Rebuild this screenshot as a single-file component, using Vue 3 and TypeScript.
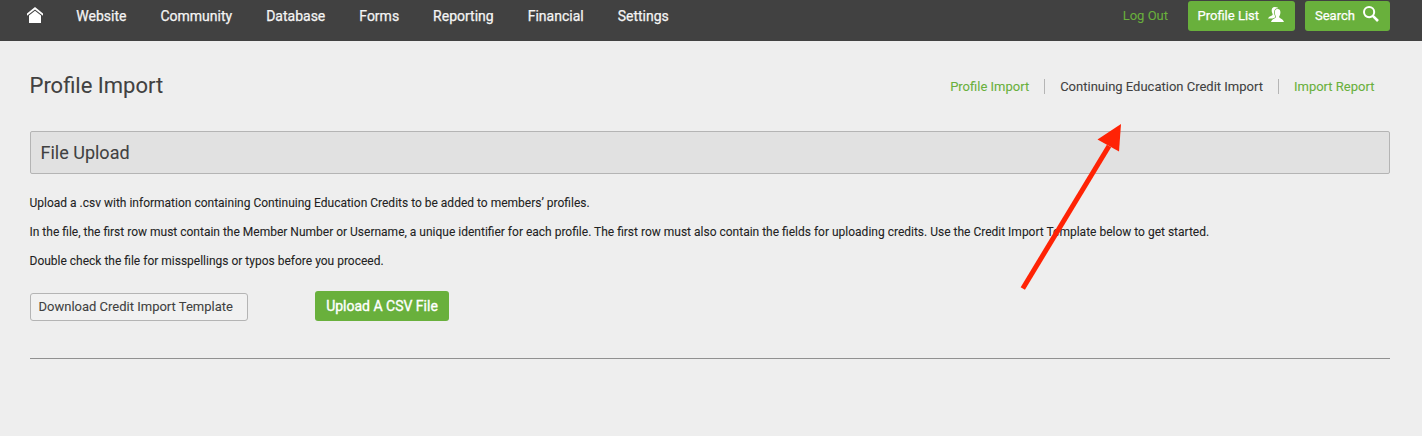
<script setup lang="ts">
interface Tab {
  label: string
  current?: boolean
}

const navItems: string[] = ['Website', 'Community', 'Database', 'Forms', 'Reporting', 'Financial', 'Settings']

const tabs: Tab[] = [
  { label: 'Profile Import' },
  { label: 'Continuing Education Credit Import', current: true },
  { label: 'Import Report' },
]

const paragraphs: string[] = [
  'Upload a .csv with information containing Continuing Education Credits to be added to members’ profiles.',
  'In the file, the first row must contain the Member Number or Username, a unique identifier for each profile. The first row must also contain the fields for uploading credits. Use the Credit Import Template below to get started.',
  'Double check the file for misspellings or typos before you proceed.',
]
</script>

<template>
  <div class="page">
    <header class="topbar">
      <nav class="nav">
        <svg class="home" width="16" height="16" viewBox="0 0 16 16" aria-label="Home">
          <path d="M0 6.6 L8 0 L16 6.6 V8.8 L8 2.4 L0 8.8 Z" fill="#fff" />
          <path d="M2 8.4 L8 3.8 L14 8.4 V16 H2 Z" fill="#fff" />
        </svg>
        <a v-for="item in navItems" :key="item" class="nav-item">{{ item }}</a>
      </nav>
      <div class="actions">
        <a class="logout">Log Out</a>
        <button class="action profile">
          <span>Profile List</span>
          <svg width="16" height="16" viewBox="0 0 16 16">
            <path d="M6.8 0 C4.5 0 3.6 1.6 3.7 3.8 C3.8 5.6 4.4 6.4 4.7 7.4 C4.8 9 .6 9 0 11.4 H10 V0.8 C9 .2 8 0 6.8 0 Z" fill="#fff" />
            <path class="front" d="M9.6 1.9 C7.4 1.9 6.7 3.6 6.8 5.8 C6.9 7.8 7.7 8.8 8.1 9.8 C8.3 11.6 3.8 11.8 3 15 H16 C15.2 11.8 10.9 11.6 11.1 9.8 C11.5 8.8 12.3 7.8 12.4 5.8 C12.5 3.6 11.8 1.9 9.6 1.9 Z" />
          </svg>
        </button>
        <button class="action search">
          <span>Search</span>
          <svg width="16" height="16" viewBox="0 0 16 16" fill="none" stroke="#fff">
            <circle cx="6.1" cy="6.1" r="5.1" stroke-width="2" />
            <path d="M9.8 9.8 L15 15" stroke-width="2.6" />
          </svg>
        </button>
      </div>
    </header>

    <main class="content">
      <div class="heading">
        <h1>Profile Import</h1>
        <div class="tabs">
          <a v-for="tab in tabs" :key="tab.label" class="tab" :class="{ current: tab.current }">{{ tab.label }}</a>
        </div>
      </div>
      <h2 class="panel-title">File Upload</h2>
      <p v-for="text in paragraphs" :key="text">{{ text }}</p>
      <div class="buttons">
        <button class="download">Download Credit Import Template</button>
        <button class="upload">Upload A CSV File</button>
      </div>
      <div class="rule"></div>
    </main>

    <svg class="arrow" width="110" height="175" viewBox="0 0 110 175">
      <path d="M7.8 168.5 L94 26" stroke="#ff2305" stroke-width="5" />
      <path d="M106 4 L82.5 19.5 L104 31.5 Z" fill="#ff2305" />
    </svg>
  </div>
</template>

<style>
body {
  background: #eee;
}
</style>

<style scoped>
.page {
  position: relative;
  width: 1422px;
  height: 436px;
  background: #eee;
  overflow: hidden;
  font-family: Roboto, sans-serif;
  color: #222;
  -webkit-text-stroke: 0.08px currentColor;
}

.topbar {
  display: flex;
  justify-content: space-between;
  box-sizing: border-box;
  height: 41px;
  padding: 0 32px 0 27px;
  background: #414141;
}

.nav {
  display: flex;
  align-items: center;
  height: 32px;
}

.home {
  margin-right: 33.3px;
  margin-top: -2px;
}

.nav-item {
  margin-right: 34px;
  color: #f4f4f4;
  font-size: 14px;
  font-weight: 400;
  line-height: 20px;
  -webkit-text-stroke-width: 0.25px;
}

.actions {
  display: flex;
  align-items: center;
  height: 30px;
  padding-top: 1px;
}

.logout {
  margin-right: 20.5px;
  margin-top: -2px;
  color: #69b03c;
  font-size: 13px;
}

button {
  box-sizing: border-box;
  border: 0;
  border-radius: 3px;
  margin: 0;
  font-family: inherit;
  white-space: nowrap;
}

.action {
  display: flex;
  justify-content: space-between;
  height: 30px;
  padding: 5px 10px 0 9.5px;
  background: #69b03c;
  color: #fff;
  font-size: 13px;
  font-weight: 400;
  line-height: 19px;
  -webkit-text-stroke-width: 0.25px;
}

.profile {
  width: 107px;
  margin-left: -0.5px;
  margin-right: 10px;
  padding-right: 11px;
}

.profile svg {
  margin-top: 1px;
}

.front {
  fill: #fff;
  stroke: #69b03c;
  stroke-width: 1.4px;
  paint-order: stroke;
}

.search {
  width: 85px;
  padding-left: 10px;
  padding-right: 11px;
}

.content {
  padding: 0 32px 0 30px;
}

.heading {
  display: flex;
  justify-content: space-between;
  align-items: center;
  height: 90px;
  padding-right: 15px;
}

h1 {
  margin: 0 0 0 -0.5px;
  color: #414141;
  font-size: 22px;
  font-weight: 400;
  line-height: 26px;
}

.tabs {
  display: flex;
  margin-right: 0.6px;
}

.tab {
  color: #69b03c;
  font-size: 13px;
  line-height: 15px;
}

.tab + .tab {
  margin-left: 15px;
  padding-left: 15px;
  border-left: 1px solid #b5b5b5;
}

.tab.current {
  color: #414141;
}

.panel-title {
  box-sizing: border-box;
  height: 43px;
  margin: 0 0 22px;
  padding: 0 9.5px;
  border: 1px solid #b4b4b4;
  border-radius: 2px;
  background: #e1e1e1;
  color: #414141;
  font-size: 18px;
  font-weight: 400;
  line-height: 42px;
}

p {
  margin: 0 0 15px -0.5px;
  font-size: 12px;
  line-height: 14px;
  white-space: nowrap;
}

.buttons {
  display: flex;
  align-items: flex-end;
  height: 38px;
}

.download {
  width: 218px;
  height: 28px;
  margin-right: 67px;
  padding: 0 7.5px 2px;
  border: 1px solid #b4b4b4;
  background: #f1f1f1;
  color: #414141;
  font-size: 13px;
  text-align: left;
}

.upload {
  width: 134px;
  height: 30px;
  padding: 0;
  background: #69b03c;
  color: #fff;
  font-size: 14px;
  font-weight: 400;
  -webkit-text-stroke-width: 0.35px;
}

.rule {
  height: 1px;
  margin-top: 37px;
  background: #909090;
}

.arrow {
  position: absolute;
  left: 1015px;
  top: 120px;
}
</style>
